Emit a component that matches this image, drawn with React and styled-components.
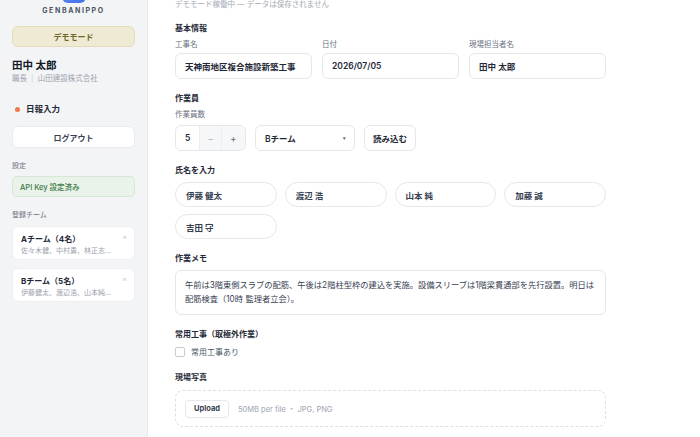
import React, { useLayoutEffect } from 'react';
import styled, { createGlobalStyle } from 'styled-components';

const teams = [
  { name: 'Aチーム（4名）', members: '佐々木健、中村勇、林正志...' },
  { name: 'Bチーム（5名）', members: '伊藤健太、渡辺浩、山本純...' },
];

const workers = ['伊藤 健太', '渡辺 浩', '山本 純', '加藤 誠', '吉田 守'];

const App = () => {
  // the page is shown scrolled a little past its header
  useLayoutEffect(() => {
    window.scrollTo(0, 47);
  }, []);

  return (
    <>
      <GlobalStyle />
      <Shell>
        <Sidebar>
          <Logo />
          <Brand>GENBANIPPO</Brand>
          <DemoBadge>デモモード</DemoBadge>
          <UserName>田中 太郎</UserName>
          <UserMeta>
            職長 <Sep>|</Sep> 山田建設株式会社
          </UserMeta>
          <NavItem>
            <Dot />
            日報入力
          </NavItem>
          <LogoutButton>ログアウト</LogoutButton>
          <SideLabel>設定</SideLabel>
          <ApiBox>API Key 設定済み</ApiBox>
          <SideLabel>登録チーム</SideLabel>
          <TeamList>
            {teams.map(t => (
              <TeamCard key={t.name}>
                <TeamName>{t.name}</TeamName>
                <TeamMembers>{t.members}</TeamMembers>
                <Close>×</Close>
              </TeamCard>
            ))}
          </TeamList>
        </Sidebar>

        <Main>
          <Content>
            <Title>日報入力</Title>
            <Subtitle>デモモード稼働中 — データは保存されません</Subtitle>

            <Section $first>
              <SectionTitle>基本情報</SectionTitle>
              <BasicGrid>
                <Field>
                  <Label>工事名</Label>
                  <Input>天神南地区複合施設新築工事</Input>
                </Field>
                <Field>
                  <Label>日付</Label>
                  <Input>2026/07/05</Input>
                </Field>
                <Field>
                  <Label>現場担当者名</Label>
                  <Input>田中 太郎</Input>
                </Field>
              </BasicGrid>
            </Section>

            <Section>
              <SectionTitle>作業員</SectionTitle>
              <SubLabel>作業員数</SubLabel>
              <Controls>
                <Stepper>
                  <StepValue>5</StepValue>
                  <StepButton $w={21} $dim>−</StepButton>
                  <StepButton $w={24}>+</StepButton>
                </Stepper>
                <Select>
                  Bチーム
                  <Caret>▾</Caret>
                </Select>
                <LoadButton>読み込む</LoadButton>
              </Controls>
            </Section>

            <Section>
              <SectionTitle>氏名を入力</SectionTitle>
              <PillGrid>
                {workers.map(w => (
                  <Pill key={w}>{w}</Pill>
                ))}
              </PillGrid>
            </Section>

            <Section>
              <SectionTitle>作業メモ</SectionTitle>
              <Memo>
                午前は3階東側スラブの配筋、午後は2階柱型枠の建込を実施。設備スリーブは1階梁貫通部を先行設置。明日は配筋検査（10時 監理者立会）。
              </Memo>
            </Section>

            <Section>
              <SectionTitle>常用工事（取極外作業）</SectionTitle>
              <CheckRow>
                <Checkbox />
                常用工事あり
              </CheckRow>
            </Section>

            <Section>
              <SectionTitle>現場写真</SectionTitle>
              <DropZone>
                <UploadButton>Upload</UploadButton>
                <DropHint>50MB per file ・ JPG, PNG</DropHint>
              </DropZone>
            </Section>

            <SubmitButton>日報を作成</SubmitButton>
          </Content>
        </Main>
      </Shell>
    </>
  );
};

export default App;

const GlobalStyle = createGlobalStyle`
  html, body {
    margin: 0;
    padding: 0;
    background: #fff;
    scrollbar-width: none;
  }
  html::-webkit-scrollbar, body::-webkit-scrollbar {
    display: none;
  }
  body {
    font-family: Inter, "Noto Sans CJK JP", sans-serif;
    color: #1f2937;
  }
`;

const Shell = styled.div`
  display: flex;
  min-height: 100vh;
`;

const Sidebar = styled.aside`
  width: 148px;
  flex-shrink: 0;
  box-sizing: border-box;
  padding: 26px 12px 24px;
  background: #f3f4f6;
  border-right: 1px solid #e7e9ed;
  display: flex;
  flex-direction: column;
`;

const Logo = styled.div`
  width: 24px;
  height: 24px;
  margin: 0 auto;
  border-radius: 6px;
  background: linear-gradient(135deg, #6b93f5, #3f6fe8);
`;

const Brand = styled.div`
  margin-top: 3px;
  text-align: center;
  font-size: 7px;
  line-height: 10px;
  font-weight: 700;
  letter-spacing: 1.6px;
  color: #4b5563;
`;

const DemoBadge = styled.div`
  margin-top: 10px;
  height: 21px;
  display: flex;
  align-items: center;
  justify-content: center;
  background: #eeead3;
  border: 1px solid #e2dcbd;
  border-radius: 6px;
  font-size: 8px;
  font-weight: 700;
  color: #6f6628;
  box-sizing: border-box;
`;

const UserName = styled.div`
  margin-top: 12px;
  font-size: 10.5px;
  line-height: 14px;
  font-weight: 700;
  color: #111827;
`;

const UserMeta = styled.div`
  font-size: 7.5px;
  line-height: 11px;
  color: #9ca3af;
`;

const Sep = styled.span`
  color: #d1d5db;
  margin: 0 2px;
`;

const NavItem = styled.div`
  margin-top: 18px;
  padding-left: 3px;
  display: flex;
  align-items: center;
  gap: 6px;
  font-size: 8.5px;
  line-height: 14px;
  font-weight: 700;
  color: #1f2937;
`;

const Dot = styled.span`
  width: 5px;
  height: 5px;
  border-radius: 50%;
  background: #ef7a47;
`;

const LogoutButton = styled.div`
  margin-top: 10px;
  height: 22px;
  display: flex;
  align-items: center;
  justify-content: center;
  background: #fff;
  border: 1px solid #e9ebef;
  border-radius: 6px;
  box-sizing: border-box;
  font-size: 8px;
  font-weight: 700;
  color: #374151;
`;

const SideLabel = styled.div`
  margin-top: 13px;
  font-size: 7px;
  line-height: 10px;
  color: #6b7280;
`;

const ApiBox = styled.div`
  margin-top: 5px;
  height: 21px;
  padding-left: 7px;
  display: flex;
  align-items: center;
  background: #e9f3e9;
  border: 1px solid #d6e7d6;
  border-radius: 5px;
  box-sizing: border-box;
  font-size: 7.5px;
  font-weight: 500;
  color: #3e7a48;
`;

const TeamList = styled.div`
  margin-top: 6px;
  display: flex;
  flex-direction: column;
  gap: 8px;
`;

const TeamCard = styled.div`
  position: relative;
  height: 34px;
  box-sizing: border-box;
  padding: 6px 8px 4px;
  background: #fff;
  border: 1px solid #eceef1;
  border-radius: 6px;
`;

const TeamName = styled.div`
  font-size: 8px;
  line-height: 12px;
  font-weight: 700;
  color: #1f2937;
`;

const TeamMembers = styled.div`
  font-size: 7px;
  line-height: 12px;
  color: #9ca3af;
`;

const Close = styled.span`
  position: absolute;
  top: 5px;
  right: 7px;
  font-size: 7px;
  color: #c4c8cf;
`;

const Main = styled.main`
  flex: 1;
  padding: 20px 27px 48px;
`;

const Content = styled.div`
  max-width: 431px;
`;

const Title = styled.h1`
  margin: 0;
  font-size: 16px;
  line-height: 22px;
  font-weight: 700;
`;

const Subtitle = styled.div`
  margin-top: 4px;
  font-size: 7.5px;
  line-height: 12px;
  color: #a3a9b3;
`;

const Section = styled.section`
  margin-top: ${p => (p.$first ? 11 : 13)}px;
`;

const SectionTitle = styled.div`
  font-size: 8px;
  line-height: 12px;
  font-weight: 700;
  color: #1f2937;
`;

const BasicGrid = styled.div`
  margin-top: 6px;
  display: grid;
  grid-template-columns: repeat(3, 1fr);
  gap: 10px;
`;

const Field = styled.div`
  display: flex;
  flex-direction: column;
`;

const Label = styled.div`
  margin-bottom: 3px;
  font-size: 7.5px;
  line-height: 10px;
  color: #6b7280;
`;

const SubLabel = styled(Label)`
  margin-top: 6px;
  margin-bottom: 5px;
`;

const Box = styled.div`
  height: 26px;
  box-sizing: border-box;
  display: flex;
  align-items: center;
  background: #fff;
  border: 1px solid #e5e7eb;
  border-radius: 6px;
  font-size: 8.5px;
  font-weight: 600;
  color: #1f2937;
`;

const Input = styled(Box)`
  padding-left: 9px;
`;

const Controls = styled.div`
  display: flex;
  gap: 9px;
`;

const Stepper = styled(Box)`
  width: 71px;
  overflow: hidden;
  align-items: stretch;
`;

const StepValue = styled.div`
  width: 24px;
  display: flex;
  align-items: center;
  justify-content: center;
`;

const StepButton = styled.div`
  width: ${p => p.$w}px;
  display: flex;
  align-items: center;
  justify-content: center;
  background: #f6f7f9;
  border-left: 1px solid #eceef1;
  font-weight: 400;
  font-size: 10px;
  color: ${p => (p.$dim ? '#b3b8c0' : '#6b7280')};
`;

const Select = styled(Box)`
  width: 100px;
  padding: 0 8px 0 9px;
  justify-content: space-between;
`;

const Caret = styled.span`
  font-size: 5px;
  color: #6b7280;
`;

const LoadButton = styled(Box)`
  width: 52px;
  justify-content: center;
`;

const PillGrid = styled.div`
  margin-top: 6px;
  display: grid;
  grid-template-columns: repeat(4, 1fr);
  column-gap: 8px;
  row-gap: 7px;
`;

const Pill = styled(Box)`
  height: 25px;
  padding-left: 10px;
  border-radius: 13px;
  font-weight: 700;
  color: #374151;
`;

const Memo = styled.div`
  margin-top: 6px;
  height: 45px;
  box-sizing: border-box;
  padding: 7px 9px;
  border: 1px solid #e5e7eb;
  border-radius: 6px;
  font-size: 8.25px;
  line-height: 14px;
  color: #374151;
`;

const CheckRow = styled.label`
  margin-top: 6px;
  display: flex;
  align-items: center;
  gap: 6px;
  font-size: 8px;
  line-height: 12px;
  color: #4b5563;
`;

const Checkbox = styled.span`
  width: 10px;
  height: 10px;
  box-sizing: border-box;
  border: 1px solid #c9cdd3;
  border-radius: 2px;
  background: #fff;
`;

const DropZone = styled.div`
  margin-top: 7px;
  height: 37px;
  box-sizing: border-box;
  padding-left: 9px;
  display: flex;
  align-items: center;
  gap: 9px;
  border: 1px dashed #dcdfe4;
  border-radius: 8px;
`;

const UploadButton = styled.div`
  width: 44px;
  height: 18px;
  box-sizing: border-box;
  display: flex;
  align-items: center;
  justify-content: center;
  border: 1px solid #e5e7eb;
  border-radius: 4px;
  font-size: 7.5px;
  font-weight: 700;
  color: #374151;
`;

const DropHint = styled.span`
  font-size: 7.5px;
  color: #9ca3af;
`;

const SubmitButton = styled.div`
  margin-top: 20px;
  height: 32px;
  display: flex;
  align-items: center;
  justify-content: center;
  border-radius: 6px;
  background: #1f2937;
  color: #fff;
  font-size: 9px;
  font-weight: 700;
`;
